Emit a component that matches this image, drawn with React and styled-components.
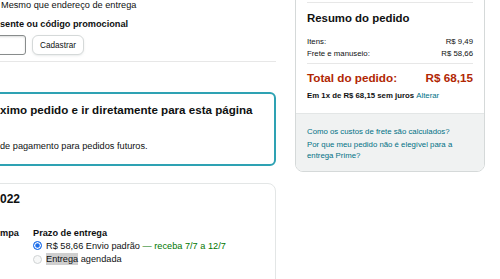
import React from "react";
import styled, { createGlobalStyle } from "styled-components";

const GlobalStyle = createGlobalStyle`
  html, body {
    margin: 0;
    padding: 0;
    background: #fff;
    overflow: hidden;
  }
  body {
    font-family: "Liberation Sans", Arial, sans-serif;
    color: #0f1111;
  }
`;

const Page = styled.div`
  display: flex;
  align-items: flex-start;
  gap: 19px;
  width: 500px;
  height: 279px;
  overflow: hidden;
`;

const Main = styled.div`
  flex: 0 0 276px;
  display: flex;
  flex-direction: column;
`;

const Note = styled.div`
  font-size: 9.2px;
  line-height: 11px;
  padding-left: 1px;
  white-space: nowrap;
`;

const Label = styled.div`
  font-size: 9.2px;
  line-height: 12px;
  font-weight: 700;
  margin-top: 7px;
  white-space: nowrap;
`;

const CodeRow = styled.div`
  display: flex;
  gap: 6px;
  margin-top: 5px;
  height: 20px;
`;

const CodeInput = styled.input`
  box-sizing: border-box;
  width: 40px;
  height: 20px;
  margin: 0 0 0 -14px;
  border: 1px solid #888c8c;
  border-radius: 3px;
  box-shadow: inset 0 1px 2px rgba(15, 17, 17, 0.15);
  outline: none;
`;

const Button = styled.button`
  box-sizing: border-box;
  width: 52px;
  height: 20px;
  padding: 0;
  border: 1px solid #d5d9d9;
  border-radius: 6px;
  background: #fff;
  box-shadow: 0 1px 2px rgba(213, 217, 217, 0.5);
  font-family: inherit;
  font-size: 8.2px;
  color: #0f1111;
`;

const Rule = styled.div`
  height: 1px;
  background: #e7e7e7;
  margin-top: ${(p) => p.$top || 0}px;
`;

const Callout = styled.div`
  margin: 30px 0 0 -10px;
  padding: 7.5px 10px 12px 8px;
  border: 2px solid #2ea2b3;
  border-radius: 6px;
`;

const CalloutTitle = styled.div`
  font-size: 11.6px;
  line-height: 15px;
  font-weight: 700;
  white-space: nowrap;
`;

const CalloutText = styled.div`
  font-size: 9.2px;
  line-height: 12px;
  margin-top: 23.5px;
  white-space: nowrap;
`;

const Card = styled.div`
  margin: 16.5px 0 0 -10px;
  padding: 8px 10px 40px 9px;
  border: 1px solid #e3e6e6;
  border-radius: 8px;
`;

const CardTitle = styled.div`
  font-size: 12px;
  line-height: 15px;
  font-weight: 700;
`;

const ShipGrid = styled.div`
  display: grid;
  grid-template-columns: 33px 1fr;
  margin-top: 20.5px;
  font-size: 9.2px;
`;

const Strong = styled.div`
  font-weight: 700;
  line-height: 12px;
  white-space: nowrap;
`;

const Option = styled.label`
  display: flex;
  align-items: center;
  gap: 4px;
  height: 13.5px;
  white-space: nowrap;
`;

const Radio = styled.span`
  box-sizing: border-box;
  width: 9px;
  height: 9px;
  border-radius: 50%;
  flex: none;
  border: ${(p) => (p.$checked ? "1.5px solid #1f6fea" : "1px solid #d0d3d4")};
  background: ${(p) => (p.$checked ? "#1f6fea" : "#f7f8f8")};
  box-shadow: ${(p) => (p.$checked ? "inset 0 0 0 1.2px #fff" : "none")};
`;

const Green = styled.span`
  color: #007600;
`;

const Highlight = styled.span`
  background: #cfcfcf;
  padding: 1px 0;
`;

const Side = styled.aside`
  flex: 0 0 190px;
  margin-top: -14px;
`;

const SummaryBox = styled.div`
  border: 1px solid #d5d9d9;
  border-radius: 8px;
  overflow: hidden;
  background: #fff;
`;

const SummaryBody = styled.div`
  padding: 15px 11px 12.5px;
`;

const SummaryTitle = styled.div`
  font-size: 11.4px;
  line-height: 14px;
  font-weight: 700;
  margin-top: 8px;
`;

const Lines = styled.div`
  margin-top: 11px;
`;

const Line = styled.div`
  display: flex;
  justify-content: space-between;
  font-size: 7.8px;
  line-height: 12px;
`;

const TotalLine = styled.div`
  display: flex;
  justify-content: space-between;
  margin-top: 6px;
  font-size: 11.7px;
  line-height: 15px;
  font-weight: 700;
  color: #b12704;
`;

const Installment = styled.div`
  margin-top: 4.5px;
  font-size: 7.8px;
  line-height: 11px;
  font-weight: 700;
  white-space: nowrap;
`;

const Link = styled.a`
  color: #007185;
  font-weight: 400;
  text-decoration: none;
`;

const HelpBox = styled.div`
  background: #f0f2f2;
  border-top: 1px solid #e3e6e6;
  padding: 12px 11px 10px;
  font-size: 7.8px;
  line-height: 11px;
`;

const HelpLink = styled.a`
  display: block;
  color: #007185;
  text-decoration: none;
  margin-top: ${(p) => (p.$first ? 0 : 2)}px;
`;

const App = () => (
  <>
    <GlobalStyle />
    <Page>
      <Main>
        <Note>Mesmo que endereço de entrega</Note>
        <Label>sente ou código promocional</Label>
        <CodeRow>
          <CodeInput type="text" />
          <Button>Cadastrar</Button>
        </CodeRow>
        <Rule $top={6} />

        <Callout>
          <CalloutTitle>ximo pedido e ir diretamente para esta página</CalloutTitle>
          <CalloutText>de pagamento para pedidos futuros.</CalloutText>
        </Callout>

        <Card>
          <CardTitle>022</CardTitle>
          <ShipGrid>
            <Strong>mpa</Strong>
            <div>
              <Strong>Prazo de entrega</Strong>
              <Option>
                <Radio $checked />
                <span>
                  R$ 58,66 Envio padrão <Green>— receba 7/7 a 12/7</Green>
                </span>
              </Option>
              <Option>
                <Radio />
                <span>
                  <Highlight>Entrega</Highlight> agendada
                </span>
              </Option>
            </div>
          </ShipGrid>
        </Card>
      </Main>

      <Side>
        <SummaryBox>
          <SummaryBody>
            <Rule />
            <SummaryTitle>Resumo do pedido</SummaryTitle>
            <Lines>
              <Line>
                <span>Itens:</span>
                <span>R$ 9,49</span>
              </Line>
              <Line>
                <span>Frete e manuseio:</span>
                <span>R$ 58,66</span>
              </Line>
            </Lines>
            <Rule $top={3} />
            <TotalLine>
              <span>Total do pedido:</span>
              <span>R$ 68,15</span>
            </TotalLine>
            <Installment>
              Em 1x de R$ 68,15 sem juros <Link href="#">Alterar</Link>
            </Installment>
          </SummaryBody>
          <HelpBox>
            <HelpLink href="#" $first>
              Como os custos de frete são calculados?
            </HelpLink>
            <HelpLink href="#">
              Por que meu pedido não é elegível para a entrega Prime?
            </HelpLink>
          </HelpBox>
        </SummaryBox>
      </Side>
    </Page>
  </>
);

export default App;
